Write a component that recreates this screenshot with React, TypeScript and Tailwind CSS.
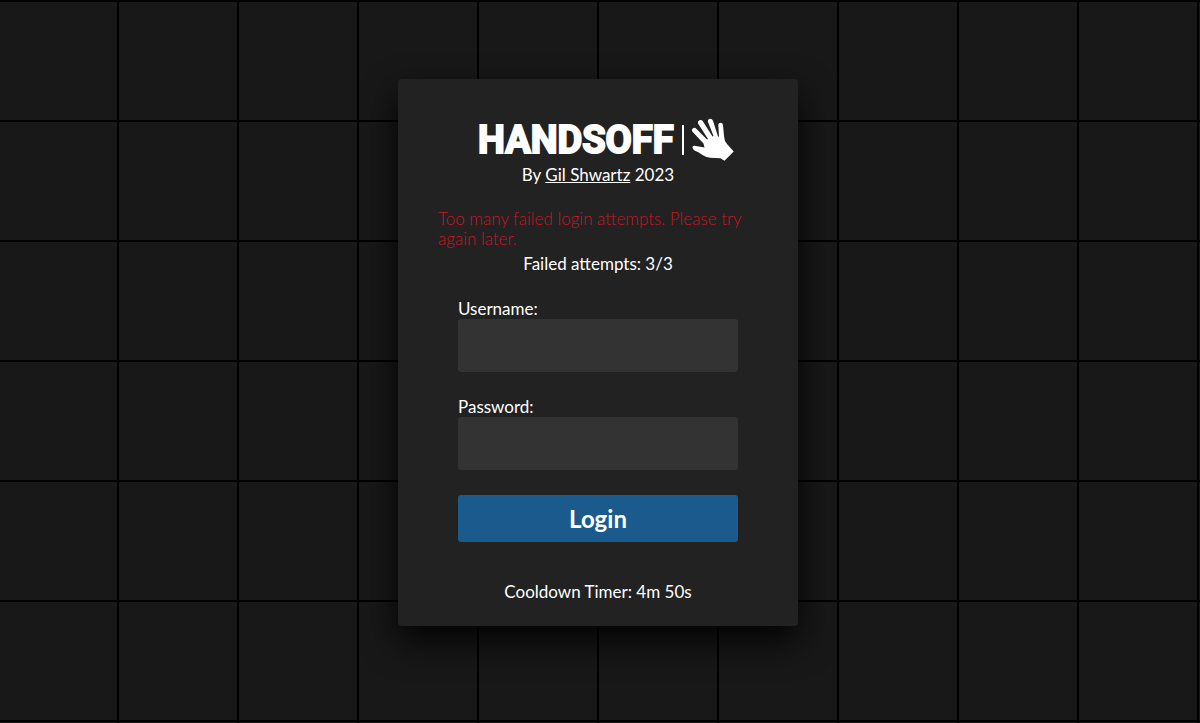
import React from "react";

function Logo() {
  return (
    <h1 className="ml-4 flex h-11 w-[260px] items-center justify-between">
      <span className="pl-0.5 font-['Roboto',sans-serif] text-[38px] leading-11 font-bold [-webkit-text-stroke:2px_#fff] [paint-order:stroke_fill]">
        HANDSOFF
      </span>
      <svg viewBox="205 0 55 44" className="h-11 w-[55px] shrink-0" aria-hidden="true">
        <rect x="206" y="7" width="2" height="30" className="fill-white" />
        <path
          className="fill-white"
          d="M216.500 29.500 Q216.300 27.500 218.500 27.700 L228.500 29.500 L227.500 25.500 L216.300 13.500 Q215 11.500 217 10.200 Q218.800 9.300 220.300 10.800 L231 21.500 L232 21 L222 5.500 Q221.300 3.300 223.500 2.200 Q225.800 1.400 227 3.400 L236.500 18.500 L237.500 18 L231.800 3.500 Q231.500 1.300 233.800 .8 Q236 .5 237 2.800 L242 18.500 L243 18.500 L242.300 6.500 Q242.500 4.800 244.500 4.800 Q246.700 4.800 247 7 L248 18 Q248.300 23 251 26 L257.700 33.500 L248.500 42.700 L244.500 40.200 L234 39.800 Q229.500 39.300 226.500 37 Q223 34.300 218.500 32.600 Q216.700 31.500 216.500 29.500 Z"
        />
      </svg>
    </h1>
  );
}

type FieldProps = { id: string; label: string; type: string };

function Field({ id, label, type }: FieldProps) {
  return (
    <div className="flex flex-col">
      <label htmlFor={id}>{label}</label>
      <input
        id={id}
        name={id}
        type={type}
        className="h-[53px] w-full rounded-[3px] bg-[#333] px-3 text-white outline-none"
      />
    </div>
  );
}

export default function App() {
  return (
    <main className="flex min-h-screen items-center justify-center bg-[#181818] bg-[linear-gradient(to_right,#000_2px,transparent_2px),linear-gradient(to_bottom,#000_2px,transparent_2px)] bg-[length:120px_120px] bg-[position:-3px_0] pr-1 pb-[18px] font-['Lato',sans-serif] text-[17px] leading-5 text-white">
      <section className="flex w-[400px] max-w-full flex-col items-center rounded bg-[#222] px-10 pt-[39px] pb-6 shadow-[0_15px_35px_rgba(0,0,0,0.9)]">
        <Logo />
        <p className="mt-[3px]">
          By{" "}
          <a href="#author" className="underline">
            Gil Shwartz
          </a>{" "}
          2023
        </p>
        <p role="alert" className="mt-6 w-full font-light text-[#cc1424]">
          Too many failed login attempts. Please try again later.
        </p>
        <p className="mt-[5px]">Failed attempts: 3/3</p>
        <form
          className="mt-[25px] flex w-full flex-col gap-[25px] px-5"
          onSubmit={(event) => event.preventDefault()}
        >
          <Field id="username" label="Username:" type="text" />
          <Field id="password" label="Password:" type="password" />
          <button
            type="submit"
            className="h-[47px] rounded-[3px] bg-[#1a5a8c] text-2xl font-bold"
          >
            Login
          </button>
        </form>
        <p className="mt-10">Cooldown Timer: 4m 50s</p>
      </section>
    </main>
  );
}
